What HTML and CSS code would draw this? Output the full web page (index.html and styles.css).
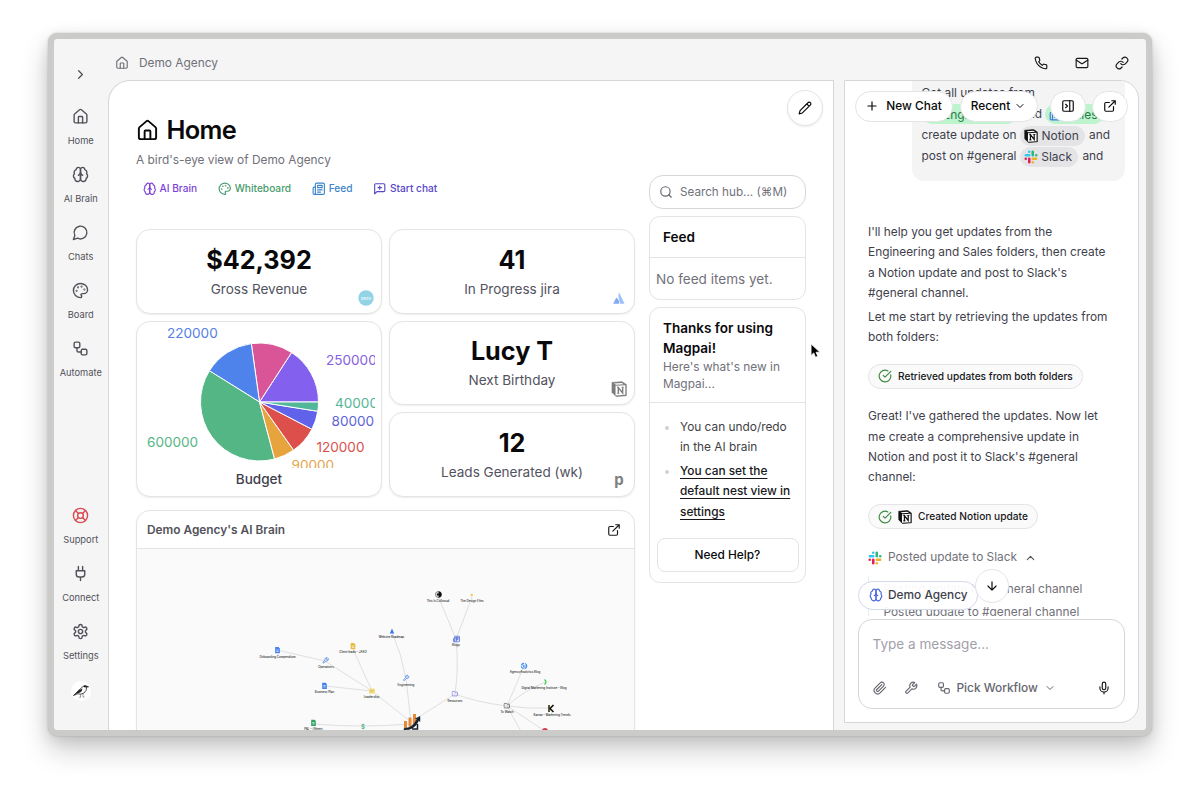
FILE: index.html
```html
<!DOCTYPE html>
<html lang="en">
<head>
<meta charset="utf-8">
<title>Demo Agency – Home</title>
<link rel="stylesheet" href="styles.css">
</head>
<body>
<svg class="sprite" aria-hidden="true">
  <symbol id="home" viewBox="0 0 24 24"><path d="M15 21v-8a1 1 0 0 0-1-1h-4a1 1 0 0 0-1 1v8"/><path d="M3 10a2 2 0 0 1 .709-1.528l7-5.999a2 2 0 0 1 2.582 0l7 5.999A2 2 0 0 1 21 10v9a2 2 0 0 1-2 2H5a2 2 0 0 1-2-2z"/></symbol>
  <symbol id="brain" viewBox="0 0 24 24"><path d="M12 5a3 3 0 1 0-5.997.125 4 4 0 0 0-2.526 5.77 4 4 0 0 0 .556 6.588A4 4 0 1 0 12 18Z"/><path d="M12 5a3 3 0 1 1 5.997.125 4 4 0 0 1 2.526 5.77 4 4 0 0 1-.556 6.588A4 4 0 1 1 12 18Z"/><path d="M15 13a4.5 4.5 0 0 1-3-4 4.5 4.5 0 0 1-3 4"/></symbol>
  <symbol id="chat" viewBox="0 0 24 24"><path d="M7.9 20A9 9 0 1 0 4 16.1L2 22Z"/></symbol>
  <symbol id="palette" viewBox="0 0 24 24"><circle cx="13.5" cy="6.5" r=".5"/><circle cx="17.5" cy="10.5" r=".5"/><circle cx="8.5" cy="7.5" r=".5"/><circle cx="6.5" cy="12.5" r=".5"/><path d="M12 2C6.5 2 2 6.5 2 12s4.5 10 10 10c.926 0 1.648-.746 1.648-1.688 0-.437-.18-.835-.437-1.125-.29-.289-.438-.652-.438-1.125a1.64 1.64 0 0 1 1.668-1.668h1.996c3.051 0 5.555-2.503 5.555-5.554C21.965 6.012 17.461 2 12 2z"/></symbol>
  <symbol id="flow" viewBox="0 0 24 24"><rect x="3" y="3" width="8" height="8" rx="2"/><path d="M7 11v4a2 2 0 0 0 2 2h4"/><rect x="13" y="13" width="8" height="8" rx="2"/></symbol>
  <symbol id="buoy" viewBox="0 0 24 24"><circle cx="12" cy="12" r="10"/><path d="m4.93 4.93 4.24 4.24M14.83 9.17l4.24-4.24M14.83 14.83l4.24 4.24M9.17 14.83l-4.24 4.24"/><circle cx="12" cy="12" r="4"/></symbol>
  <symbol id="plug" viewBox="0 0 24 24"><path d="M12 22v-5M9 8V2M15 8V2M18 8v5a4 4 0 0 1-4 4h-4a4 4 0 0 1-4-4V8Z"/></symbol>
  <symbol id="gear" viewBox="0 0 24 24"><path d="M12.22 2h-.44a2 2 0 0 0-2 2v.18a2 2 0 0 1-1 1.73l-.43.25a2 2 0 0 1-2 0l-.15-.08a2 2 0 0 0-2.73.73l-.22.38a2 2 0 0 0 .73 2.73l.15.1a2 2 0 0 1 1 1.72v.51a2 2 0 0 1-1 1.74l-.15.09a2 2 0 0 0-.73 2.73l.22.38a2 2 0 0 0 2.73.73l.15-.08a2 2 0 0 1 2 0l.43.25a2 2 0 0 1 1 1.73V20a2 2 0 0 0 2 2h.44a2 2 0 0 0 2-2v-.18a2 2 0 0 1 1-1.73l.43-.25a2 2 0 0 1 2 0l.15.08a2 2 0 0 0 2.73-.73l.22-.39a2 2 0 0 0-.73-2.73l-.15-.08a2 2 0 0 1-1-1.74v-.5a2 2 0 0 1 1-1.74l.15-.09a2 2 0 0 0 .73-2.73l-.22-.38a2 2 0 0 0-2.73-.73l-.15.08a2 2 0 0 1-2 0l-.43-.25a2 2 0 0 1-1-1.73V4a2 2 0 0 0-2-2z"/><circle cx="12" cy="12" r="3"/></symbol>
  <symbol id="news" viewBox="0 0 24 24"><path d="M4 22h16a2 2 0 0 0 2-2V4a2 2 0 0 0-2-2H8a2 2 0 0 0-2 2v16a2 2 0 0 1-2 2Zm0 0a2 2 0 0 1-2-2v-9c0-1.1.9-2 2-2h2M18 14h-8M15 18h-5M10 6h8v4h-8V6Z"/></symbol>
  <symbol id="chatplus" viewBox="0 0 24 24"><path d="M21 15a2 2 0 0 1-2 2H7l-4 4V5a2 2 0 0 1 2-2h14a2 2 0 0 1 2 2zM12 7v6M9 10h6"/></symbol>
  <symbol id="external" viewBox="0 0 24 24"><path d="M15 3h6v6M10 14 21 3M18 13v6a2 2 0 0 1-2 2H5a2 2 0 0 1-2-2V8a2 2 0 0 1 2-2h6"/></symbol>
  <symbol id="pencil" viewBox="0 0 24 24"><path d="M17 3a2.85 2.83 0 1 1 4 4L7.5 20.5 2 22l1.5-5.5ZM15 5l4 4"/></symbol>
  <symbol id="search" viewBox="0 0 24 24"><circle cx="11" cy="11" r="8"/><path d="m21 21-4.3-4.3"/></symbol>
  <symbol id="phone" viewBox="0 0 24 24"><path d="M22 16.92v3a2 2 0 0 1-2.18 2 19.79 19.79 0 0 1-8.63-3.07 19.5 19.5 0 0 1-6-6 19.79 19.79 0 0 1-3.07-8.67A2 2 0 0 1 4.11 2h3a2 2 0 0 1 2 1.72 12.84 12.84 0 0 0 .7 2.81 2 2 0 0 1-.45 2.11L8.09 9.91a16 16 0 0 0 6 6l1.27-1.27a2 2 0 0 1 2.11-.45 12.84 12.84 0 0 0 2.81.7A2 2 0 0 1 22 16.92z"/></symbol>
  <symbol id="mail" viewBox="0 0 24 24"><rect x="2" y="4" width="20" height="16" rx="2"/><path d="m22 7-8.97 5.7a1.94 1.94 0 0 1-2.06 0L2 7"/></symbol>
  <symbol id="link" viewBox="0 0 24 24"><path d="M10 13a5 5 0 0 0 7.54.54l3-3a5 5 0 0 0-7.07-7.07l-1.72 1.71"/><path d="M14 11a5 5 0 0 0-7.54-.54l-3 3a5 5 0 0 0 7.07 7.07l1.71-1.71"/></symbol>
  <symbol id="right" viewBox="0 0 24 24"><path d="m9 18 6-6-6-6"/></symbol>
  <symbol id="down" viewBox="0 0 24 24"><path d="m6 9 6 6 6-6"/></symbol>
  <symbol id="up" viewBox="0 0 24 24"><path d="m18 15-6-6-6 6"/></symbol>
  <symbol id="arrow" viewBox="0 0 24 24"><path d="M12 5v14M19 12l-7 7-7-7"/></symbol>
  <symbol id="plus" viewBox="0 0 24 24"><path d="M5 12h14M12 5v14"/></symbol>
  <symbol id="panel" viewBox="0 0 24 24"><rect x="3" y="3" width="18" height="18" rx="2"/><path d="M15 3v18M8 9l3 3-3 3"/></symbol>
  <symbol id="check" viewBox="0 0 24 24"><path d="M21.8 10A10 10 0 1 1 17 3.335M9 11l3 3L22 4"/></symbol>
  <symbol id="clip" viewBox="0 0 24 24"><path d="m21.44 11.05-9.19 9.19a6 6 0 0 1-8.49-8.49l8.57-8.57A4 4 0 1 1 18 8.84l-8.59 8.57a2 2 0 0 1-2.83-2.83l8.49-8.48"/></symbol>
  <symbol id="wrench" viewBox="0 0 24 24"><path d="M14.7 6.3a1 1 0 0 0 0 1.4l1.6 1.6a1 1 0 0 0 1.4 0l3.77-3.77a6 6 0 0 1-7.94 7.94l-6.91 6.91a2.12 2.12 0 0 1-3-3l6.91-6.91a6 6 0 0 1 7.94-7.94l-3.76 3.76z"/></symbol>
  <symbol id="mic" viewBox="0 0 24 24"><path d="M12 2a3 3 0 0 0-3 3v7a3 3 0 0 0 6 0V5a3 3 0 0 0-3-3ZM19 10v2a7 7 0 0 1-14 0v-2M12 19v3"/></symbol>
  <symbol id="folder" viewBox="0 0 24 24"><path d="M20 20a2 2 0 0 0 2-2V8a2 2 0 0 0-2-2h-7.900l-2-3H4a2 2 0 0 0-2 2v13a2 2 0 0 0 2 2Z"/></symbol>
  <symbol id="notion" viewBox="0 0 24 24"><path d="M1.500 2.200 16.500 1 23 5.200V22L7.500 23.200 1.500 17z" fill="currentColor" stroke="currentColor" stroke-width="1"/><path d="M6.800 7.300 21.500 6.400V20.800L6.800 21.700z" fill="#fff" stroke="none"/><path d="m4.500 3.700 11.400-.8 3.200 2-11.600.7z" fill="#fff" stroke="none"/><path d="M11 18.300V10l6.500 8V9.500" fill="none" stroke="currentColor" stroke-width="2.100" stroke-linejoin="miter"/><path d="M9 9.700h2.800M9.200 18.600h3.400M15.600 9.300h3.600" fill="none" stroke="currentColor" stroke-width="1.200"/></symbol>
  <symbol id="slack" viewBox="0 0 24 24"><g stroke-width="4.400" fill="none"><path d="M9 3v0M3.200 9H9" stroke="#36c5f0"/><path d="M15 3.200V9M21 9v0" stroke="#2eb67d"/><path d="M15 15h5.800M15 21v0" stroke="#ecb22e"/><path d="M9 15v5.800M3 15v0" stroke="#e01e5a"/></g></symbol>
  <symbol id="doc" viewBox="0 0 12 14"><path d="M1 0h7l3 3v11H1z" fill="currentColor" stroke="none"/><path d="M3.500 6.500h5M3.500 9.500h5" stroke="#fff" stroke-width="1.400"/></symbol>
</svg>

<div class="window">
  <nav class="rail">
    <svg class="i rail-toggle"><use href="#right"/></svg>
    <a class="rail-item"><svg class="i"><use href="#home"/></svg>Home</a>
    <a class="rail-item"><svg class="i"><use href="#brain"/></svg>AI Brain</a>
    <a class="rail-item"><svg class="i"><use href="#chat"/></svg>Chats</a>
    <a class="rail-item"><svg class="i"><use href="#palette"/></svg>Board</a>
    <a class="rail-item"><svg class="i"><use href="#flow"/></svg>Automate</a>
    <div class="rail-gap"></div>
    <a class="rail-item"><svg class="i red"><use href="#buoy"/></svg>Support</a>
    <a class="rail-item"><svg class="i"><use href="#plug"/></svg>Connect</a>
    <a class="rail-item"><svg class="i"><use href="#gear"/></svg>Settings</a>
    <svg class="bird" viewBox="0 0 20 20"><circle cx="10" cy="10" r="10" fill="#fff"/><path d="M2.500 14.500 8 9 12 5.500Q13.500 3.800 15.300 5L17.500 5.800l-2 .5Q16 9.500 13 12 10 13.800 6.500 12.800z" fill="#fff" stroke="#222" stroke-width=".8"/><path d="M2.500 14.500 8 9.200 11.500 7.500Q11.500 10 9 11.400L6 12.600zM12.300 5.400Q13.800 3.800 15.300 5L17.500 5.800l-2.400.5Q13.500 6.800 12.300 5.400z" fill="#222"/><path d="M9.500 13.500v2.800H8.200M12 13v3.100h1.500" fill="none" stroke="#555" stroke-width=".6"/></svg>
  </nav>

  <div class="shell">
    <header class="topbar">
      <svg class="i"><use href="#home"/></svg><span class="crumb">Demo Agency</span>
      <svg class="i"><use href="#phone"/></svg><svg class="i"><use href="#mail"/></svg><svg class="i"><use href="#link"/></svg>
    </header>
    <div class="body">
      <main class="hub">
        <button class="edit"><svg class="i"><use href="#pencil"/></svg></button>
        <section class="left">
          <h1 class="title"><svg class="i"><use href="#home"/></svg>Home</h1>
          <p class="subtitle">A bird's-eye view of Demo Agency</p>
          <div class="links">
            <a class="violet"><svg class="i"><use href="#brain"/></svg>AI Brain</a>
            <a class="green"><svg class="i"><use href="#palette"/></svg>Whiteboard</a>
            <a class="blue"><svg class="i"><use href="#news"/></svg>Feed</a>
            <a class="indigo"><svg class="i"><use href="#chatplus"/></svg>Start chat</a>
          </div>
          <div class="stats">
            <div class="card stat"><strong>$42,392</strong><span>Gross Revenue</span>
              <svg class="brand" viewBox="0 0 16 16"><circle cx="8" cy="8" r="7.700" fill="#92d3e6"/><text x="8" y="9.500" class="xero">xero</text></svg></div>
            <div class="card stat"><strong>41</strong><span>In Progress jira</span>
              <svg class="brand" viewBox="0 0 16 16"><path d="M8 2.300 13.500 13.700H9.300Q6.500 7 8 2.300z" fill="#9bc0fa"/><path d="M5.300 7.500Q8.700 10.500 8.200 13.700H2.200z" fill="#82aaf3"/></svg></div>
            <div class="card budget">
              <svg class="pie" viewBox="143 322 232 146">
                <g transform="translate(259.500 402)" stroke="#fff" stroke-width="1">
                  <path d="M0 0H59A59 59 0 0 0 32.100-49.500Z" fill="#8460ee"/>
                  <path d="M0 0 32.100-49.500A59 59 0 0 0-8.200-58.400Z" fill="#da5597"/>
                  <path d="M0 0-8.200-58.400A59 59 0 0 0-50.100-31.200Z" fill="#4f83ec"/>
                  <path d="M0 0-50.100-31.200A59 59 0 0 0 15.100 57Z" fill="#55b685"/>
                  <path d="M0 0 15.100 57A59 59 0 0 0 34.100 48.100Z" fill="#e7a33e"/>
                  <path d="M0 0 34.100 48.100A59 59 0 0 0 52.400 27.200Z" fill="#dc4f4a"/>
                  <path d="M0 0 52.400 27.200A59 59 0 0 0 58.300 9.300Z" fill="#6063ea"/>
                  <path d="M0 0 58.300 9.300A59 59 0 0 0 59 0Z" fill="#52b698"/>
                </g>
                <text x="167" y="338" fill="#5680e3">220000</text>
                <text x="326" y="365.300" fill="#8460e6">250000</text>
                <text x="335" y="407.700" fill="#52b698">40000</text>
                <text x="331.500" y="425.500" fill="#6063d8">80000</text>
                <text x="316.500" y="451.500" fill="#d9504c">120000</text>
                <text x="291.500" y="470" fill="#e5a54a">90000</text>
                <text x="147" y="447" fill="#55b685">600000</text>
              </svg>
              <b>Budget</b>
            </div>
            <div class="card stat"><strong>Lucy T</strong><span>Next Birthday</span><svg class="brand faded"><use href="#notion"/></svg></div>
            <div class="card stat"><strong>12</strong><span>Leads Generated (wk)</span><em class="brand pipe">p</em></div>
          </div>
          <div class="card brain">
            <div class="brain-head">Demo Agency's AI Brain<svg class="i"><use href="#external"/></svg></div>
            <svg class="graph" viewBox="137 549 497 181">
              <g class="edges">
                <path d="M277 650 325 661 372 691M325 686 372 691 352 647M372 691 411 722M392 632Q402 655 406 679L411 722M314 724Q360 728 411 724M411 722 455 694Q459 668 456 639M438 596 456 639 472 597M455 694Q475 702 507 706M507 706 524 666M507 706Q522 692 545 682M507 706Q528 709 550 708M507 706 523 735M507 706 545 731"/>
              </g>
              <g fill="none" stroke-width="2">
                <use href="#doc" x="274.500" y="647" width="6" height="6.500" color="#4480ee"/>
                <use href="#doc" x="321.500" y="682.500" width="6" height="6.500" color="#4480ee"/>
                <use href="#doc" x="350" y="643" width="6" height="6.500" color="#e8bc3e"/>
                <use href="#doc" x="310.500" y="719.500" width="6" height="6.500" color="#34a066"/>
                <use href="#wrench" x="322" y="657" width="7" height="7" stroke="#4b82ea" stroke-width="2.600"/>
                <use href="#wrench" x="402.500" y="674.500" width="7" height="7" stroke="#4b82ea" stroke-width="2.600"/>
                <use href="#folder" x="451.500" y="690.500" width="6.500" height="6.500" stroke="#7069e8" stroke-width="2.500"/>
                <use href="#folder" x="503.500" y="702.500" width="6.500" height="6.500" stroke="#444" stroke-width="2.500"/>
                <use href="#news" x="453" y="635.500" width="7" height="7" stroke="#4a6ae0" stroke-width="3"/>
              </g>
              <path d="M392 628.500 394.200 633.500h-4.400z" fill="#3478ee"/>
              <rect x="369" y="688.500" width="6" height="5" rx=".6" fill="#f4df88"/>
              <path d="M370 690.500h4M370 692h3" stroke="#cda93a" stroke-width=".5"/>
              <circle cx="438.500" cy="594.500" r="3" fill="#fff" stroke="#222" stroke-width=".6"/><path d="M438.500 591.500a3 3 0 0 1 0 6z" fill="#111"/><circle cx="438" cy="594.500" r="1.200" fill="#111"/>
              <circle cx="471.700" cy="595" r="1.200" fill="#f3c94f"/>
              <circle cx="524" cy="666" r="2.700" fill="none" stroke="#3f8eea" stroke-width="1.200" stroke-dasharray="3.500 1"/><path d="M522.500 665h1v2h1.500v-2" fill="none" stroke="#3f8eea" stroke-width=".8"/>
              <path d="M544.500 679.500q3 2.500 0 5" fill="none" stroke="#42cc55" stroke-width="1.300"/>
              <path d="M549 705v7M553.500 705 550 708.500l3.500 3.500" fill="none" stroke="#111" stroke-width="1.600"/><path d="M549 705v7" stroke="#b7a329" stroke-width=".5"/>
              <circle cx="545" cy="731" r="3" fill="#d73650"/>
              <path d="M404 721h3v8h-3zM408.500 717.500h3v9h-3zM413 714h3v10h-3z" fill="#e98a3b"/>
              <path d="M404 728.500Q413 728 417 719l-1.500-.5 4.500-2v5l-1.300-1Q415 730 404 730z" fill="#17202e" stroke="#17202e" stroke-width=".5"/><path d="M412 729h5.500v-5" fill="none" stroke="#17202e" stroke-width="1.500"/>
              <text x="363" y="729" class="dollar">$</text>
              <g class="labels">
                <text x="277.500" y="658">Onboarding Compendium</text><text x="326" y="668">Operations</text>
                <text x="324.500" y="693">Business Plan</text><text x="353" y="653">Client leads – JASO</text>
                <text x="371.500" y="698">Leadership</text><text x="391.500" y="638">Website Roadmap</text>
                <text x="406" y="685.500">Engineering</text><text x="438" y="601.500">This Is Collossal</text>
                <text x="472" y="602">The Design Files</text><text x="456" y="646">Blogs</text>
                <text x="455" y="701.500">Resources</text><text x="525" y="672.700">AgencyAnalytics Blog</text>
                <text x="544" y="689">Digital Marketing Institute – Blog</text><text x="552" y="715.500">Kantar – Marketing Trends</text>
                <text x="507" y="713">To Watch</text><text x="313.500" y="730">P&amp;L – (Sheet)</text>
              </g>
            </svg>
          </div>
        </section>
        <aside class="right">
          <div class="search"><svg class="i"><use href="#search"/></svg>Search hub... (⌘M)</div>
          <div class="panel feed"><h2>Feed</h2><p>No feed items yet.</p></div>
          <div class="panel news">
            <div class="news-head"><h2>Thanks for using Magpai!</h2><p>Here's what's new in Magpai...</p></div>
            <ul><li>You can undo/redo in the AI brain</li><li><a>You can set the default nest view in settings</a></li></ul>
            <button class="help">Need Help?</button>
          </div>
        </aside>
      </main>

      <section class="chat">
        <div class="thread">
          <div class="bubble">
            <div>Get all updates from</div>
            <div><span class="chip folder-chip"><svg class="i"><use href="#news"/></svg>Engineering</span> and <span class="chip folder-chip"><svg class="i"><use href="#news"/></svg>Sales</span></div>
            <div>create update on <span class="chip"><svg class="i ink"><use href="#notion"/></svg>Notion</span> and</div>
            <div>post on #general <span class="chip"><svg class="i"><use href="#slack"/></svg>Slack</span> and</div>
          </div>
          <p class="reply">I'll help you get updates from the Engineering and Sales folders, then create a Notion update and post to Slack's #general channel.</p>
          <p class="reply">Let me start by retrieving the updates from both folders:</p>
          <div class="done"><svg class="i ok"><use href="#check"/></svg>Retrieved updates from both folders</div>
          <p class="reply">Great! I've gathered the updates. Now let me create a comprehensive update in Notion and post it to Slack's #general channel:</p>
          <div class="done"><svg class="i ok"><use href="#check"/></svg><svg class="i ink"><use href="#notion"/></svg>Created Notion update</div>
          <div class="step"><svg class="i"><use href="#slack"/></svg>Posted update to Slack<svg class="i caret"><use href="#up"/></svg></div>
          <div class="log"><p>Posting update to #general channel</p><p>Posted update to #general channel</p></div>
        </div>
        <div class="composer">
          <div class="placeholder">Type a message...</div>
          <div class="tools">
            <svg class="i"><use href="#clip"/></svg><svg class="i"><use href="#wrench"/></svg>
            <span class="pick"><svg class="i"><use href="#flow"/></svg>Pick Workflow<svg class="i caret"><use href="#down"/></svg></span>
            <svg class="i mic"><use href="#mic"/></svg>
          </div>
        </div>
        <div class="chat-bar">
          <button class="pill new"><svg class="i"><use href="#plus"/></svg>New Chat</button>
          <button class="pill recent">Recent<svg class="i"><use href="#down"/></svg></button>
          <button class="pill round"><svg class="i"><use href="#panel"/></svg></button>
          <button class="pill round last"><svg class="i"><use href="#external"/></svg></button>
        </div>
        <div class="context"><svg class="i"><use href="#brain"/></svg>Demo Agency</div>
        <button class="jump"><svg class="i"><use href="#arrow"/></svg></button>
      </section>
    </div>
  </div>
</div>
<svg class="cursor" viewBox="0 0 12 18"><path d="M1 1v13l3-2.800L6 16l2.600-1.100-2-4.500H11z" fill="#000" stroke="#fff" stroke-width=".9"/></svg>
</body>
</html>
```
FILE: styles.css
```css
* { box-sizing: border-box; margin: 0; padding: 0; }
body { width: 1200px; height: 799px; overflow: hidden; background: #fff; font-family: Inter, "Noto Sans", sans-serif; font-size: 11.86px; line-height: 20.33px; color: #3f3f46; }
button { font: inherit; background: #fff; }
.sprite { position: absolute; width: 0; height: 0; }
.i { width: 14px; height: 14px; flex: none; fill: none; stroke: currentColor; stroke-width: 2; stroke-linecap: round; stroke-linejoin: round; }

.window { display: flex; width: 1104px; height: 703px; margin: 33px 0 0 48px; border: 6px solid #cbcbc9; border-radius: 9px; background: #f5f5f5; overflow: hidden; box-shadow: 0 0 2px rgba(0,0,0,.22), 0 14px 28px rgba(0,0,0,.2), 0 4px 14px rgba(0,0,0,.1); }

/* Navigation rail */
.rail { width: 53.500px; flex: none; display: flex; flex-direction: column; align-items: center; padding-top: 28px; color: #52525b; }
.rail-toggle { width: 15px; height: 15px; margin-bottom: 25px; }
.rail-item { height: 58px; display: flex; flex-direction: column; align-items: center; font-size: 9.320px; line-height: 14px; gap: 9px; padding-top: 1px; }
.rail-item .i { width: 17px; height: 17px; stroke-width: 2; }
.rail-gap { height: 109px; }
.red { color: #dc4a52; }
.bird { width: 20px; height: 20px; margin-top: 1px; }

.shell { flex: 1; display: flex; flex-direction: column; min-width: 0; }
.topbar { height: 41px; flex: none; display: flex; align-items: center; padding: 6.500px 17px 0 7.500px; color: #18181b; gap: 26.500px; }
.topbar > .i:first-child, .crumb { color: #71717a; }
.crumb { margin: 0 auto 0 -16.500px; }
.body { flex: 1; display: flex; min-height: 0; }

/* Hub */
.hub { position: relative; width: 726px; flex: none; display: flex; gap: 14px; padding: 0 0 0 27.500px; background: #fff; border: 1px solid #d6d6d9; border-bottom: 0; border-radius: 22px 0 0 0; overflow: hidden; }
.left { width: 499px; flex: none; display: flex; flex-direction: column; }
.title { display: flex; align-items: center; gap: 7.500px; height: 30px; margin-top: 38px; font-size: 25.400px; font-weight: 600; letter-spacing: -.025em; color: #09090b; }
.title .i { width: 23px; height: 23px; }
.subtitle { margin-top: 8px; color: #71717a; }
.links { display: flex; gap: 20.500px; height: 20px; margin: 8px 0 0 6.500px; align-items: center; font-size: 10.160px; font-weight: 500; }
.links a { display: flex; align-items: center; gap: 3.500px; }
.links .i { width: 13.500px; height: 13.500px; }
.violet { color: #7c3fd8; } .green { color: #479c6c; } .blue { color: #3d84c8; } .indigo { color: #5545c8; }

.stats { display: grid; grid-template-columns: 246px 246px; grid-template-rows: 84.500px 84.500px 84.500px; gap: 7px; margin-top: 31px; }
.card { background: #fff; border: 1px solid #e4e4e7; border-radius: 14px; box-shadow: 0 1px 2px rgba(0,0,0,.07); }
.stat { position: relative; display: flex; flex-direction: column; align-items: center; padding-top: 13.500px; }
.stat strong { font-size: 25.200px; line-height: 33px; color: #09090b; }
.stat span { font-size: 13.550px; line-height: 24px; color: #52525e; }
.brand { position: absolute; right: 7px; bottom: 7px; width: 16px; height: 16px; }
.xero { font-size: 5px; font-weight: 600; text-anchor: middle; fill: #e5f7fc; }
.faded { color: #7c7c7c; }
.pipe { font-style: normal; font-weight: 700; font-size: 15px; line-height: 14px; color: #808080; text-align: center; }
.budget { grid-row: span 2; display: flex; flex-direction: column; align-items: center; }
.pie { width: 232px; height: 146px; font-size: 13.550px; }
.budget b { font-size: 13.550px; font-weight: 500; line-height: 22px; color: #3f3f4c; }
.brain { flex: none; height: 240px; margin-top: 13.500px; overflow: hidden; }
.brain-head { display: flex; align-items: center; justify-content: space-between; height: 38px; padding: 0 13px 0 10px; border-bottom: 1px solid #e4e4e7; font-weight: 600; color: #52525b; }
.brain-head .i { color: #18181b; }
.graph { display: block; width: 497px; height: 181px; background: #fafafa; }
.edges { fill: none; stroke: #ccc; stroke-width: .6; }
.labels { font-size: 2.950px; font-weight: 500; text-anchor: middle; fill: #222; }
.dollar { font-size: 6px; font-weight: 600; text-anchor: middle; fill: #3fae83; }

.right { width: 157px; flex: none; display: flex; flex-direction: column; gap: 7px; padding-top: 94px; }
.edit { position: absolute; right: 9.500px; top: 9px; width: 36px; height: 36px; border: 1px solid #e4e4e7; border-radius: 50%; display: grid; place-items: center; color: #09090b; box-shadow: 0 1px 2px rgba(0,0,0,.08); }
.search { display: flex; align-items: center; gap: 7px; height: 34px; padding-left: 9px; border: 1px solid #d6d6da; border-radius: 14px; color: #71717a; font-size: 11.700px; white-space: nowrap; }
.search .i { color: #666670; }
.panel { border: 1px solid #e4e4e7; border-radius: 11px; }
.panel h2 { font-size: 13.550px; font-weight: 600; color: #09090b; }
.feed { height: 83.500px; }
.feed h2 { height: 41px; line-height: 41px; padding-left: 13px; border-bottom: 1px solid #e4e4e7; }
.feed p { font-size: 13.550px; line-height: 42px; padding-left: 6px; color: #71717a; }
.news { height: 276px; }
.news-head { height: 95.500px; padding: 10.500px 13px; border-bottom: 1px solid #e4e4e7; }
.news-head p { line-height: 17px; color: #71717a; }
.news ul { list-style: none; padding: 14px 8px 16px 30px; }
.news li { position: relative; }
.news li + li { margin-top: 3.500px; }
.news li::before { content: ""; position: absolute; left: -15px; top: 9px; width: 4px; height: 4px; border-radius: 50%; background: #d1d1d6; }
.news li a { font-weight: 500; color: #18181b; text-decoration: underline; text-underline-offset: 3px; }
.help { display: block; width: 142px; height: 34px; margin: 0 auto; border: 1px solid #e4e4e7; border-radius: 8px; font-weight: 500; color: #09090b; }

/* Chat */
.chat { position: relative; width: 295px; height: 643px; margin-left: 10px; border: 1px solid #d6d6d9; border-radius: 0 19px 19px 0; background: #fff; overflow: hidden; display: flex; flex-direction: column; color: #3f3f4c; }
.thread { height: 535px; flex: none; overflow: hidden; padding-left: 23.500px; }
.bubble { width: 213px; height: 121px; margin: -21px 0 41px 43.500px; padding: 22.500px 10px 0; border-radius: 12px; background: #f4f4f5; line-height: 21.200px; white-space: nowrap; }
.bubble div { height: 21.200px; }
.chip { display: inline-flex; align-items: center; gap: 3.500px; height: 20px; padding: 0 6px 0 4px; margin: 0 1px 0 0; border-radius: 10px; background: #e4e4e7; font-size: 12px; vertical-align: middle; }
.folder-chip { background: #bdf3cd; color: #2c7a48; }
.folder-chip .i { color: #4174e8; }
.ink { color: #111; }
.reply { width: 246px; margin-bottom: 3.300px; }
.done { display: flex; align-items: center; gap: 6px; width: fit-content; height: 25px; padding: 0 9px; margin: 16.500px 0 17.500px; border: 1px solid #e4e4e7; border-radius: 13px; background: #fafafa; font-size: 10.160px; font-weight: 500; color: #18181b; }
.ok { color: #3e8a42; }
.step { display: flex; align-items: center; gap: 6px; height: 20px; margin-top: 18.500px; color: #71717a; }
.step .caret { margin-left: 1px; width: 13px; color: #52525b; }
.log { margin: 8px 0 0; padding: 3px 0 0 14.500px; border-left: 1px solid #ececee; color: #71717a; }
.log p + p { margin-top: 3px; }
.composer { height: 90px; margin: 3px 13px 0 13.500px; padding: 14px 13px 0 13.500px; border: 1px solid #d6d6da; border-radius: 14px; background: #fff; }
.placeholder { font-size: 13.550px; color: #9f9fa9; }
.tools { display: flex; align-items: center; gap: 17px; margin-top: 23.500px; height: 20px; color: #66666f; }
.pick { display: flex; align-items: center; gap: 6px; font-weight: 500; margin-left: 2px; }
.pick .caret { width: 12px; margin-left: 0; }
.mic { color: #18181b; margin-left: auto; }
.chat-bar { position: absolute; left: 10px; top: 9.500px; display: flex; }
.pill { height: 31px; border: 1px solid #e4e4e7; border-radius: 16px; display: flex; align-items: center; justify-content: center; font-weight: 500; color: #09090b; }
.new { width: 98px; gap: 7px; } .recent { width: 78px; margin-left: 7px; gap: 4px; } .recent .i { width: 12px; } .round { width: 36px; margin-left: 12.500px; } .last { margin-left: 6px; }
.context { position: absolute; left: 13.500px; top: 499.500px; width: 120px; height: 29px; display: flex; align-items: center; gap: 5px; padding-left: 10px; border: 1px solid #d3d9e8; border-radius: 15px; background: rgba(255,255,255,.95); font-weight: 500; }
.context .i { color: #4a67e0; }
.jump { position: absolute; left: 130px; top: 487.500px; width: 34px; height: 34px; border: 1px solid #e4e4e7; border-radius: 50%; display: grid; place-items: center; color: #09090b; }
.cursor { position: absolute; left: 809.500px; top: 342.500px; width: 11px; height: 16px; }
```
